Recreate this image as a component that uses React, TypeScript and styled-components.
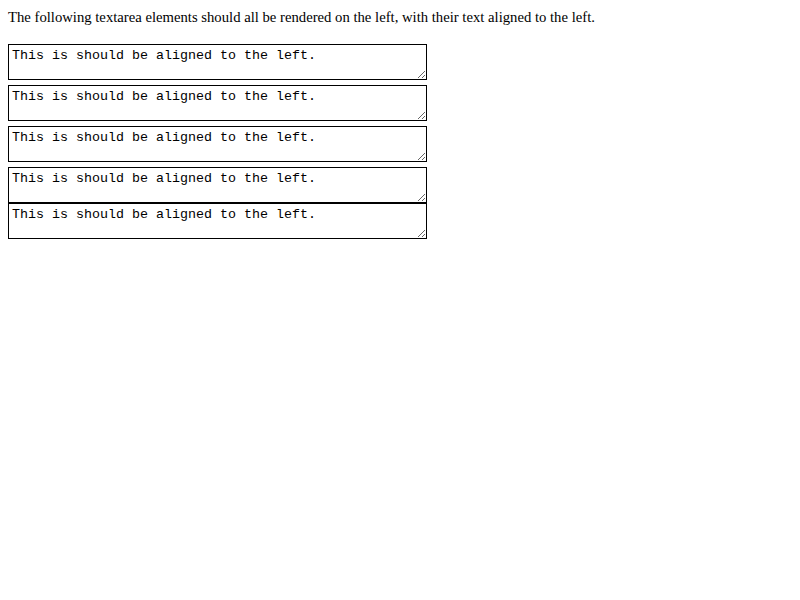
import styled, { createGlobalStyle } from "styled-components";

const GlobalStyle = createGlobalStyle`
  body {
    margin: 8px;
    background: #ffffff;
    color: #000000;
    font-family: "Liberation Serif", "Times New Roman", serif;
    font-size: 14.7px;
  }
`;

const Intro = styled.p`
  margin: 0 0 17px;
  line-height: 19px;
`;

const Field = styled.textarea<{ $flush?: boolean }>`
  display: block;
  box-sizing: border-box;
  width: 419px;
  height: 36px;
  margin: ${(p) => (p.$flush ? "0" : "0 0 5px")};
  padding: 3px 3px 2px;
  border: 1px solid #000000;
  background: #ffffff;
  color: #000000;
  font-family: "Liberation Mono", "Courier New", monospace;
  font-size: 13.333px;
  line-height: 15px;
  text-align: left;
  outline: none;
`;

const TEXT = "This is should be aligned to the left.";

function App() {
  return (
    <>
      <GlobalStyle />
      <Intro>
        The following textarea elements should all be rendered on the left, with their text aligned to the left.
      </Intro>
      <Field defaultValue={TEXT} />
      <Field defaultValue={TEXT} />
      <Field defaultValue={TEXT} />
      <Field defaultValue={TEXT} $flush />
      <Field defaultValue={TEXT} $flush />
    </>
  );
}

export default App;
